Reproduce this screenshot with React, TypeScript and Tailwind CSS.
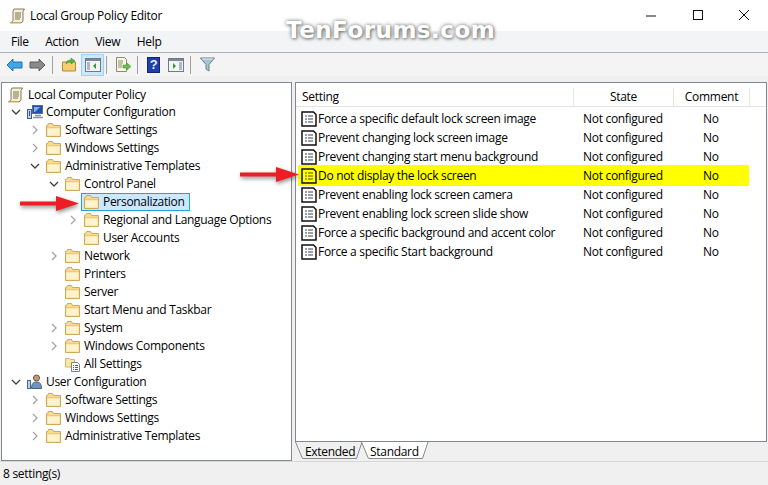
import React from 'react';

const FolderIcon = () => (
  <svg width="18" height="16" viewBox="0 0 18 16" className="shrink-0">
    <path d="M1.500 14.500V3.500h1l1-2h4l1 2h7v11z" fill="#f7dc8e" stroke="#cfa95c" />
    <path d="M2.500 6.500h12v7h-12z" fill="#fdf4cf" />
    <path d="M2 5.500h13" stroke="#ecc876" />
  </svg>
);

const ScrollIcon = () => (
  <svg width="17" height="16" viewBox="0 0 17 16" className="shrink-0">
    <path d="M5 1h10.500l-1.500 2.500v9.500l-1 1.500H2.500l1.500-2V3z" fill="#f8f0d4" stroke="#80785f" />
    <path d="M6 5h6M6 7h6M6 9h6M6 11h5" stroke="#77735f" />
    <path d="M1 14.800h11" stroke="#c8ac68" strokeWidth="1.500" />
  </svg>
);

const ComputerIcon = () => (
  <svg width="18" height="16" viewBox="0 0 18 16" className="shrink-0">
    <rect x="6.500" y="1.500" width="10" height="8" fill="#1f4fbe" stroke="#5b6a80" />
    <path d="M8 3h6l-5 5H8z" fill="#7fb1ee" />
    <path d="M9 11.500h6M7 13.500h10" stroke="#8793a3" strokeWidth="1.500" />
    <rect x="1.500" y="5.500" width="4" height="9" fill="#c9d2de" stroke="#3f5b85" />
    <path d="M3.500 7v5" stroke="#274f9c" />
  </svg>
);

const UserIcon = () => (
  <svg width="18" height="16" viewBox="0 0 18 16" className="shrink-0">
    <circle cx="10.500" cy="4" r="3" fill="#c79a72" stroke="#6b5240" />
    <path d="M5.500 14.500c0-5 2-6.500 5-6.500s5 1.500 5 6.500z" fill="#6f95c0" stroke="#4a5f7c" />
    <rect x="1.500" y="6.500" width="3" height="8" fill="#bcd0e6" stroke="#3f6a9c" />
  </svg>
);

const AllSettingsIcon = () => (
  <svg width="18" height="16" viewBox="0 0 18 16" className="shrink-0">
    <path d="M1.500 11V2.500h4l1 1h4V11z" fill="#fbe6a2" stroke="#d6b468" />
    <path d="M7.500 6.500h6l2 2v7h-8z" fill="#fff" stroke="#77828f" />
    <path d="M9 9.500h1M11 9.500h3M9 11.500h1M11 11.500h3M9 13.500h1M11 13.500h3" stroke="#56616e" />
  </svg>
);

const PolicyIcon = ({ hot }: { hot?: boolean }) => (
  <svg width="16" height="16" viewBox="0 0 16 16" className="shrink-0">
    <path d="M1 1h11.500l2.500 2.500V15H1z" fill={hot ? '#ffff00' : '#fff'} stroke="#111" strokeWidth="1.500" />
    <path d="M4 5h2M7 5h5M4 8h2M7 8h5M4 11h2M7 11h5" stroke={hot ? '#55551a' : '#3c4550'} strokeWidth="1.200" />
  </svg>
);

const Chevron = ({ open }: { open?: boolean }) => (
  <svg width="10" height="10" viewBox="0 0 10 10">
    {open ? (
      <path d="M1 3l4 4 4-4" fill="none" stroke="#3f3f3f" strokeWidth="1.300" />
    ) : (
      <path d="M3 1l4 4-4 4" fill="none" stroke="#a6a6a6" strokeWidth="1.300" />
    )}
  </svg>
);

const RedArrow = () => (
  <svg width="62" height="17" viewBox="0 0 62 17" className="[filter:drop-shadow(1px_2px_2px_rgba(0,0,0,0.45))]">
    <path d="M0 6.500h36V1l23 7.500L36 16v-5.500H0z" fill="#ee1c25" />
  </svg>
);

const treeRows: { label: string; level: 1 | 2 | 3 | 4; chev?: 'open' | 'closed'; icon?: 'computer' | 'user' | 'all'; selected?: boolean }[] = [
  { label: 'Computer Configuration', level: 1, chev: 'open', icon: 'computer' },
  { label: 'Software Settings', level: 2, chev: 'closed' },
  { label: 'Windows Settings', level: 2, chev: 'closed' },
  { label: 'Administrative Templates', level: 2, chev: 'open' },
  { label: 'Control Panel', level: 3, chev: 'open' },
  { label: 'Personalization', level: 4, selected: true },
  { label: 'Regional and Language Options', level: 4, chev: 'closed' },
  { label: 'User Accounts', level: 4 },
  { label: 'Network', level: 3, chev: 'closed' },
  { label: 'Printers', level: 3 },
  { label: 'Server', level: 3 },
  { label: 'Start Menu and Taskbar', level: 3 },
  { label: 'System', level: 3, chev: 'closed' },
  { label: 'Windows Components', level: 3, chev: 'closed' },
  { label: 'All Settings', level: 3, icon: 'all' },
  { label: 'User Configuration', level: 1, chev: 'open', icon: 'user' },
  { label: 'Software Settings', level: 2, chev: 'closed' },
  { label: 'Windows Settings', level: 2, chev: 'closed' },
  { label: 'Administrative Templates', level: 2, chev: 'closed' },
];

const levelPad = { 1: 'pl-[3px]', 2: 'pl-[22px]', 3: 'pl-[41px]', 4: 'pl-[60px]' };

const settings = [
  'Force a specific default lock screen image',
  'Prevent changing lock screen image',
  'Prevent changing start menu background',
  'Do not display the lock screen',
  'Prevent enabling lock screen camera',
  'Prevent enabling lock screen slide show',
  'Force a specific background and accent color',
  'Force a specific Start background',
];

export default function App() {
  return (
    <div className="relative w-[768px] h-[485px] overflow-hidden bg-[#f0f0f0] text-[12px] leading-none text-black font-['Open_Sans',sans-serif] flex flex-col tracking-[-0.3px]">
      {/* title bar */}
      <div className="h-[31px] bg-white flex items-center shrink-0 pt-[1px]">
        <div className="ml-[9px] mr-[4px]"><ScrollIcon /></div>
        <span>Local Group Policy Editor</span>
        <div className="ml-auto flex items-center">
          <svg width="46" height="24" viewBox="0 0 46 24"><path d="M17 12h10" stroke="#111" /></svg>
          <svg width="46" height="24" viewBox="0 0 46 24"><rect x="18.500" y="6.500" width="9" height="9" fill="none" stroke="#111" /></svg>
          <svg width="46" height="24" viewBox="0 0 46 24" className="mr-[1px]"><path d="M18 6l10 10M28 6L18 16" stroke="#111" /></svg>
        </div>
      </div>

      {/* menu */}
      <div className="h-[22px] bg-[#f3f4f6] border-b border-[#b4b4b4] flex items-center shrink-0 gap-[16.500px] pl-[11px]">
        <span>File</span>
        <span>Action</span>
        <span>View</span>
        <span>Help</span>
      </div>

      {/* toolbar */}
      <div className="h-[23px] bg-[#f4f4f4] flex items-center shrink-0 pl-[6px]">
        <svg width="17" height="14" viewBox="0 0 17 14"><path d="M1 7l6-6v3h9v6H7v3z" fill="#3fa6ea" stroke="#2070b8" /></svg>
        <svg width="17" height="14" viewBox="0 0 17 14" className="ml-[6px]"><path d="M16 7l-6-6v3H1v6h9v3z" fill="#8a8a8a" stroke="#5d5d5d" /></svg>
        <div className="w-px h-[18px] bg-[#a0a0a0] ml-[6px] mr-[9px]" />
        <svg width="15" height="15" viewBox="0 0 15 15"><path d="M.5 14V5h13v9z" fill="#f4cf6e" stroke="#b48a35" /><path d="M4 7c0-3 2-4 5-4V1l4 3-4 3V5c-2 0-3 0-5 2z" fill="#54b848" stroke="#2f8a2c" strokeWidth=".5" /></svg>
        <div className="ml-[4px] w-[23px] h-[22px] bg-[#cce8ff] border border-[#99d1ff] flex items-center justify-center">
          <svg width="16" height="14" viewBox="0 0 16 14"><rect x=".5" y=".5" width="15" height="13" fill="#f4f4f4" stroke="#6f7b88" /><path d="M1 1h14v2H1z" fill="#7c8794" /><path d="M2 5h3M2 7h3M2 9h3M2 11h3" stroke="#6f7b88" /><path d="M11 5v6L8 8z" fill="#2d9a41" /></svg>
        </div>
        <div className="w-px h-[18px] bg-[#a0a0a0] ml-[2px] mr-[8px]" />
        <svg width="17" height="15" viewBox="0 0 17 15"><path d="M1.500.5h8l2 2v12h-10z" fill="#fbf6de" stroke="#8a8a78" /><path d="M3 4h5M3 6h5M3 8h4M3 10h4" stroke="#8a8a78" /><path d="M8 8h4V6l4 3.500-4 3.500v-2H8z" fill="#6cc04a" stroke="#3f8f2c" strokeWidth=".5" /></svg>
        <div className="w-px h-[18px] bg-[#a0a0a0] ml-[5px] mr-[9px]" />
        <div className="w-[13px] h-[16px] bg-[#1f3fa8] border border-[#13276e] text-[#e6ecff] text-[13px] font-bold flex items-center justify-center font-['Liberation_Sans',sans-serif]">?</div>
        <svg width="16" height="14" viewBox="0 0 16 14" className="ml-[8px]"><rect x=".5" y=".5" width="15" height="13" fill="#f4f4f4" stroke="#6f7b88" /><path d="M1 1h14v2H1z" fill="#7c8794" /><path d="M11 5h3M11 7h3M11 9h3M11 11h3" stroke="#6f7b88" /><path d="M5 5v6l3-3z" fill="#2d9a41" /></svg>
        <div className="w-px h-[18px] bg-[#a0a0a0] ml-[6px] mr-[9px]" />
        <svg width="15" height="15" viewBox="0 0 15 15"><path d="M.5 1h14L9 7.500V14l-3-2V7.500z" fill="#a9c3d4" stroke="#6b7d8a" /><path d="M2 2h11" stroke="#e7f0f5" /></svg>
      </div>

      {/* panes */}
      <div className="flex-1 min-h-0 flex pt-[6px] pl-px gap-[3px] pr-px">
        <div className="w-[291px] bg-white border border-[#828790] pt-[2px] overflow-hidden shrink-0">
          <div className="h-[18px] flex items-center pl-[5px] pt-px">
            <ScrollIcon />
            <span className="ml-[4px]">Local Computer Policy</span>
          </div>
          {treeRows.map((row, i) => (
            <div key={i} className={`h-[18px] flex items-center ${levelPad[row.level]}`}>
              <div className="w-[21px] shrink-0 flex items-center justify-center">
                {row.chev && <Chevron open={row.chev === 'open'} />}
              </div>
              <div className={`h-[18px] flex items-center border ${row.selected ? 'bg-[#cce8ff] border-[#26a0da] -ml-[2px] pl-[1px] pr-[4px]' : 'border-transparent -ml-px'}`}>
                {row.icon === 'computer' ? <ComputerIcon /> : row.icon === 'user' ? <UserIcon /> : row.icon === 'all' ? <AllSettingsIcon /> : <FolderIcon />}
                <span className="ml-[2px]">{row.label}</span>
              </div>
            </div>
          ))}
        </div>

        <div className="flex-1 min-w-0 flex flex-col">
          <div className="flex-1 min-h-0 bg-white border border-[#828790]">
            <div className="h-[24px] flex items-center border-b border-[#e5e5e5] pt-[5px]">
              <div className="w-[278px] h-full pl-[6px] flex items-center border-r border-[#e5e5e5]">Setting</div>
              <div className="w-[100px] h-full flex items-center justify-center border-r border-[#e5e5e5]">State</div>
              <div className="w-[76px] h-full flex items-center justify-center border-r border-[#e5e5e5]">Comment</div>
            </div>
            <div className="pt-[2px]">
              {settings.map((s, i) => (
                <div key={s} className={`ml-[2px] w-[451px] flex items-center ${i === 3 ? 'h-[21px] -my-px bg-[#ffff00]' : 'h-[19px]'}`}>
                  <div className="ml-[3px]"><PolicyIcon hot={i === 3} /></div>
                  <span className="ml-[1px] w-[265px] shrink-0 whitespace-nowrap">{s}</span>
                  <span className="w-[120px] shrink-0 whitespace-nowrap">Not configured</span>
                  <span>No</span>
                </div>
              ))}
            </div>
          </div>
          <div className="h-[19px] flex shrink-0 items-start">
            <div className="relative w-[68px] h-[17px] flex items-center pl-[10px] pt-[2px] -mr-[2px] whitespace-nowrap">
              <svg width="68" height="17" viewBox="0 0 68 17" className="absolute inset-0"><path d="M.5 0l7 16.500h54L67 0" fill="#f0f0f0" stroke="#8a8a8a" /></svg>
              <span className="relative">Extended</span>
            </div>
            <div className="relative w-[68px] h-[17px] flex items-center pl-[9px] pt-[2px] whitespace-nowrap">
              <svg width="68" height="17" viewBox="0 0 68 17" className="absolute inset-0"><path d="M.5 0l7 16.500h54L67 0" fill="#fff" stroke="#8a8a8a" /></svg>
              <span className="relative">Standard</span>
            </div>
          </div>
        </div>
      </div>

      {/* status */}
      <div className="h-[24px] border-t border-[#d8d8d8] bg-[#f0f0f0] flex items-center pl-[3px] shrink-0">8 setting(s)</div>

      {/* overlays */}
      <div className="absolute left-[20px] top-[195px]"><RedArrow /></div>
      <div className="absolute left-[240px] top-[166px]"><RedArrow /></div>
      <div className="absolute left-[286px] top-[17px] font-['DejaVu_Sans',sans-serif] font-bold text-[23px] leading-[26px] text-white tracking-[0.5px] [text-shadow:0_0_4px_#777,1px_1px_3px_#888]">TenForums.com</div>
    </div>
  );
}
